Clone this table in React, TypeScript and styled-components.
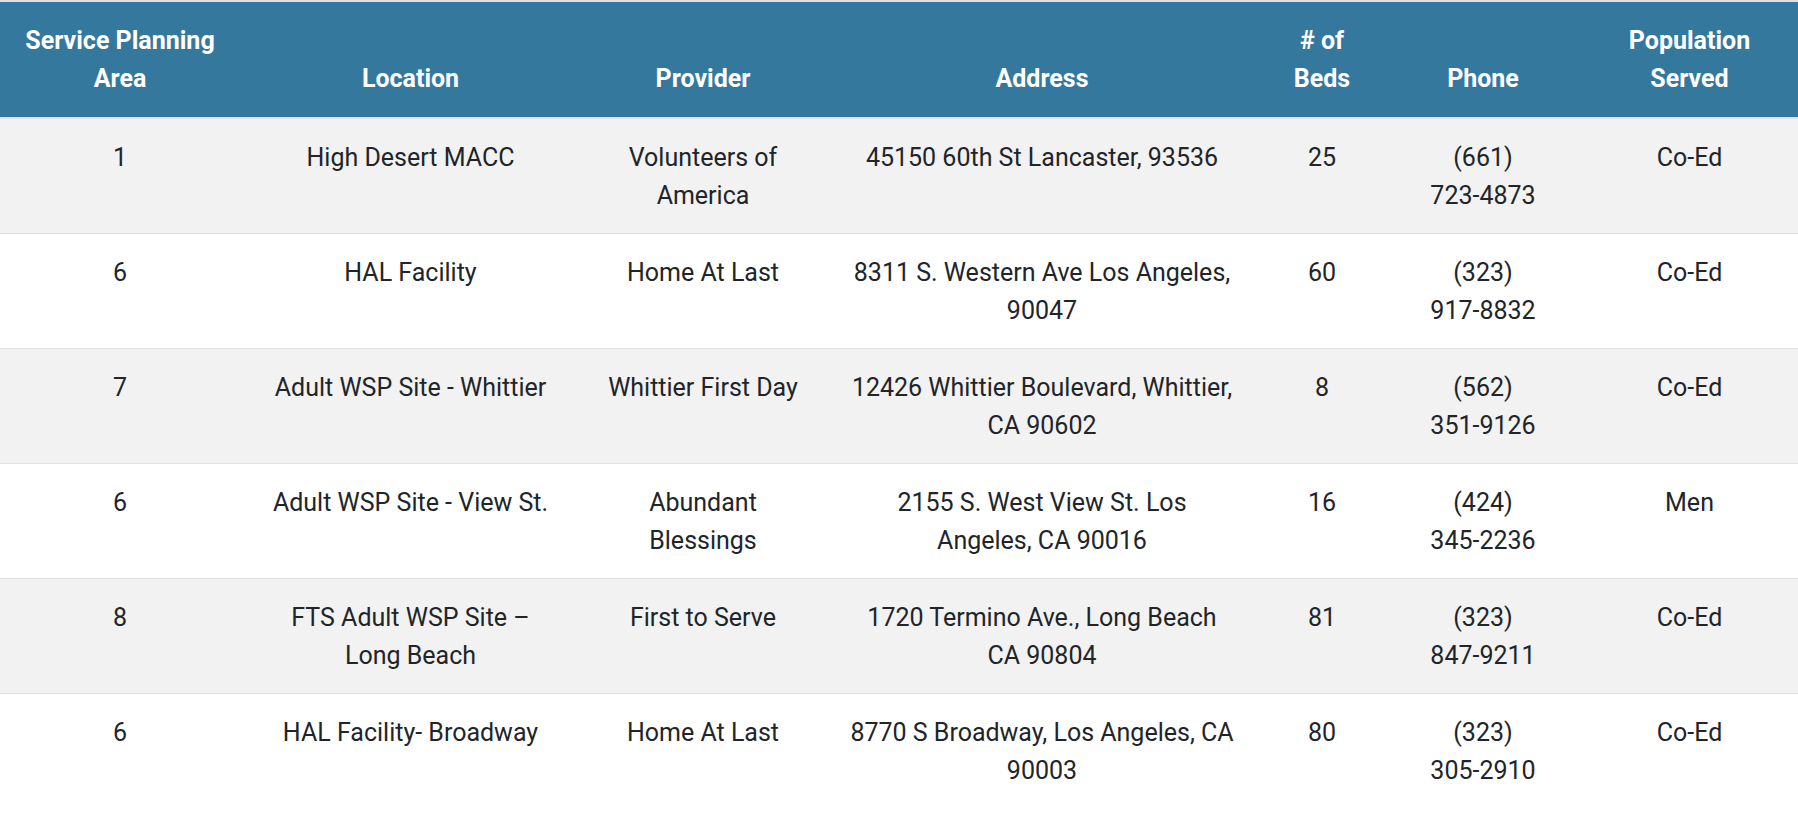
import React from "react";
import styled, { createGlobalStyle } from "styled-components";

const GlobalStyle = createGlobalStyle`
  html, body {
    margin: 0;
    padding: 0;
    background: #ffffff;
  }
  body {
    font-family: Roboto, "Liberation Sans", Arial, sans-serif;
    color: #212529;
  }
`;

const Table = styled.table`
  width: 100%;
  border-collapse: collapse;
  table-layout: fixed;
  font-family: Roboto, "Liberation Sans", Arial, sans-serif;
  font-size: 25px;
  line-height: 37.5px;
`;

const HeadCell = styled.th`
  background: #35789e;
  color: #ffffff;
  font-weight: 700;
  text-align: center;
  vertical-align: bottom;
  padding: 20px 16px;
  border-top: 2px solid #dee2e6;
  border-bottom: 2px solid #dee2e6;
`;

const BodyRow = styled.tr<{ $striped: boolean }>`
  background: ${(p) => (p.$striped ? "#f2f2f2" : "#ffffff")};
`;

const Cell = styled.td`
  text-align: center;
  vertical-align: top;
  padding: 20px 16px 18px;
  line-height: 38px;
  border-top: 1px solid #dee2e6;
  color: #212529;
  font-weight: 400;
`;

const Line = styled.span`
  display: block;
  white-space: nowrap;
`;

const columns: { width: number; title: string[] }[] = [
  { width: 240, title: ["Service Planning", "Area"] },
  { width: 341, title: ["Location"] },
  { width: 244, title: ["Provider"] },
  { width: 434, title: ["Address"] },
  { width: 126, title: ["# of", "Beds"] },
  { width: 196, title: ["Phone"] },
  { width: 217, title: ["Population", "Served"] },
];

const rows: string[][][] = [
  [
    ["1"],
    ["High Desert MACC"],
    ["Volunteers of", "America"],
    ["45150 60th St Lancaster, 93536"],
    ["25"],
    ["(661)", "723-4873"],
    ["Co-Ed"],
  ],
  [
    ["6"],
    ["HAL Facility"],
    ["Home At Last"],
    ["8311 S. Western Ave Los Angeles,", "90047"],
    ["60"],
    ["(323)", "917-8832"],
    ["Co-Ed"],
  ],
  [
    ["7"],
    ["Adult WSP Site - Whittier"],
    ["Whittier First Day"],
    ["12426 Whittier Boulevard, Whittier,", "CA 90602"],
    ["8"],
    ["(562)", "351-9126"],
    ["Co-Ed"],
  ],
  [
    ["6"],
    ["Adult WSP Site - View St."],
    ["Abundant", "Blessings"],
    ["2155 S. West View St. Los", "Angeles, CA 90016"],
    ["16"],
    ["(424)", "345-2236"],
    ["Men"],
  ],
  [
    ["8"],
    ["FTS Adult WSP Site \u2013", "Long Beach"],
    ["First to Serve"],
    ["1720 Termino Ave., Long Beach", "CA 90804"],
    ["81"],
    ["(323)", "847-9211"],
    ["Co-Ed"],
  ],
  [
    ["6"],
    ["HAL Facility- Broadway"],
    ["Home At Last"],
    ["8770 S Broadway, Los Angeles, CA", "90003"],
    ["80"],
    ["(323)", "305-2910"],
    ["Co-Ed"],
  ],
];

const Lines: React.FC<{ lines: string[] }> = ({ lines }) => (
  <>
    {lines.map((l, i) => (
      <Line key={i}>{l}</Line>
    ))}
  </>
);

export default function App() {
  return (
    <>
      <GlobalStyle />
      <Table>
        <colgroup>
          {columns.map((c, i) => (
            <col key={i} style={{ width: c.width }} />
          ))}
        </colgroup>
        <thead>
          <tr>
            {columns.map((c, i) => (
              <HeadCell key={i}>
                <Lines lines={c.title} />
              </HeadCell>
            ))}
          </tr>
        </thead>
        <tbody>
          {rows.map((r, ri) => (
            <BodyRow key={ri} $striped={ri % 2 === 0}>
              {r.map((cell, ci) => (
                <Cell key={ci}>
                  <Lines lines={cell} />
                </Cell>
              ))}
            </BodyRow>
          ))}
        </tbody>
      </Table>
    </>
  );
}
